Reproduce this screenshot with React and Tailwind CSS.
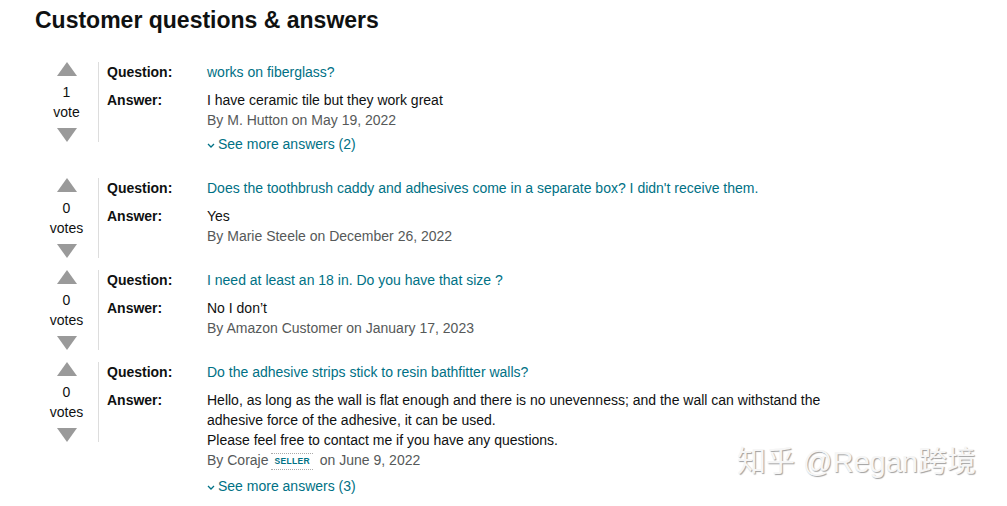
import React from 'react';

const questions = [
  {
    votes: 1,
    question: 'works on fiberglass?',
    answer: ['I have ceramic tile but they work great'],
    by: 'M. Hutton',
    date: 'May 19, 2022',
    more: 2,
  },
  {
    votes: 0,
    question: "Does the toothbrush caddy and adhesives come in a separate box? I didn't receive them.",
    answer: ['Yes'],
    by: 'Marie Steele',
    date: 'December 26, 2022',
  },
  {
    votes: 0,
    question: 'I need at least an 18 in. Do you have that size ?',
    answer: ['No I don’t'],
    by: 'Amazon Customer',
    date: 'January 17, 2023',
  },
  {
    votes: 0,
    question: 'Do the adhesive strips stick to resin bathfitter walls?',
    answer: [
      'Hello, as long as the wall is flat enough and there is no unevenness; and the wall can withstand the',
      'adhesive force of the adhesive, it can be used.',
      'Please feel free to contact me if you have any questions.',
    ],
    by: 'Coraje',
    seller: true,
    date: 'June 9, 2022',
    more: 3,
  },
];

const Triangle = ({ down }) => (
  <svg width="20" height="14" viewBox="0 0 20 14" className="block">
    <polygon points={down ? '0,0 20,0 10,14' : '10,0 20,14 0,14'} fill="#9a9a9a" />
  </svg>
);

const QuestionBlock = ({ q }) => (
  <div className="flex items-start">
    <div className="flex h-20 w-16 flex-col items-center justify-between border-r border-[#dddddd] text-[14px] leading-5 text-[#0f1111]">
      <Triangle />
      <div className="text-center">
        <div>{q.votes}</div>
        <div>{q.votes === 1 ? 'vote' : 'votes'}</div>
      </div>
      <Triangle down />
    </div>
    <div className="pb-6 pl-2 text-[14px] leading-5">
      <div className="flex">
        <span className="w-[100px] font-bold text-[#0f1111]">Question:</span>
        <span className="text-[#007185]">{q.question}</span>
      </div>
      <div className="mt-2 flex">
        <span className="w-[100px] font-bold text-[#0f1111]">Answer:</span>
        <div>
          {q.answer.map((line) => (
            <div key={line} className="text-[#0f1111]">{line}</div>
          ))}
          <div className="flex h-5 items-center text-[#565959]">
            <span>By {q.by}</span>
            {q.seller && (
              <span className="ml-[3px] mr-[7px] mt-[2px] border-y border-dotted border-[#aaaaaa] px-[3px] text-[8.5px] font-bold leading-[15px] tracking-[0.3px] text-[#007185]">
                SELLER
              </span>
            )}
            <span>{q.seller ? 'on' : '\u00a0on'} {q.date}</span>
          </div>
          {q.more && (
            <div className={`${q.seller ? 'mt-[6px]' : 'mt-1'} flex items-center text-[#007185]`}>
              <svg width="8" height="6" viewBox="0 0 8 6" className="mr-[3px] mt-[3px]">
                <polyline points="1,1 4,4 7,1" fill="none" stroke="#007185" strokeWidth="1.3" />
              </svg>
              <span>See more answers ({q.more})</span>
            </div>
          )}
        </div>
      </div>
    </div>
  </div>
);

export default function App() {
  return (
    <div
      className="relative h-[506px] w-[1007px] overflow-hidden bg-white pl-[35px] pt-[4px]"
      style={{ fontFamily: '"Liberation Sans", Arial, sans-serif' }}
    >
      <h2 className="text-[23px] font-bold leading-8 text-[#0f1111]">Customer questions &amp; answers</h2>
      <div className="mt-[26px]">
        {questions.map((q, i) => (
          <QuestionBlock key={i} q={q} />
        ))}
      </div>
      <div
        className="absolute left-[737px] top-[441px] text-[29px] text-[#f6f6f6] [text-shadow:1px_1px_1px_#a0a0a0]"
        style={{ fontFamily: '"Liberation Sans", "Noto Sans CJK SC", sans-serif' }}
      >
        知乎 @Regan跨境
      </div>
    </div>
  );
}
